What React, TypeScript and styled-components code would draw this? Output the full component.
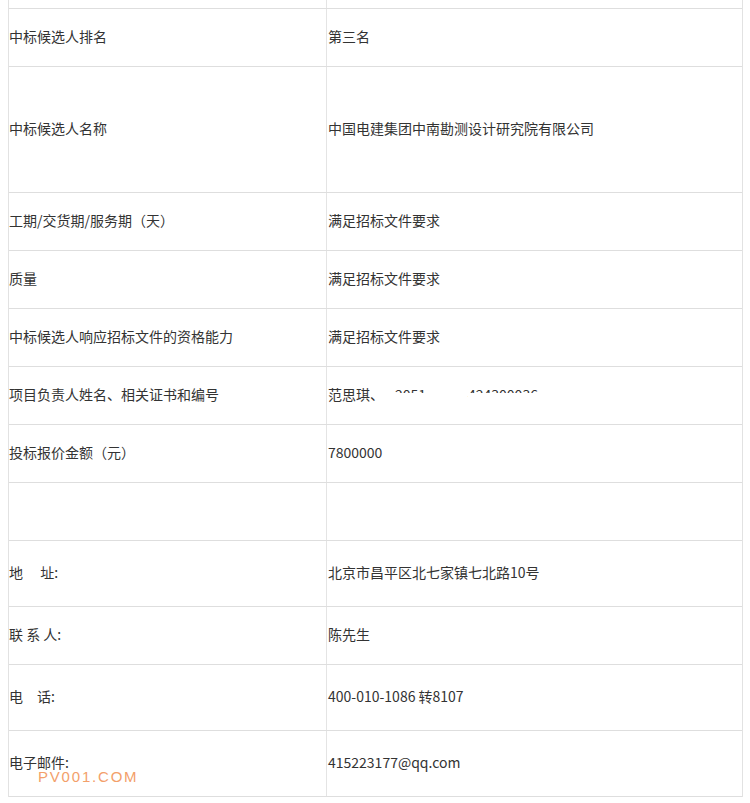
import React from "react";
import styled, { createGlobalStyle } from "styled-components";

const GlobalStyle = createGlobalStyle`
  html, body {
    margin: 0;
    padding: 0;
    background: #ffffff;
  }
  body {
    font-family: "Noto Sans CJK SC", "Microsoft YaHei", sans-serif;
    color: #333333;
  }
`;

const Page = styled.div`
  padding: 0 0 0 8px;
  width: 750px;
  box-sizing: border-box;
`;

const Table = styled.div`
  width: 735px;
  box-sizing: border-box;
  border-left: 1px solid #e2e2e2;
  border-right: 1px solid #e2e2e2;
`;

const Row = styled.div<{ $h: number }>`
  display: grid;
  grid-template-columns: 318px 1fr;
  height: ${(p) => p.$h}px;
  box-sizing: border-box;
  border-bottom: 1px solid #dedede;
`;

const Cell = styled.div`
  display: flex;
  align-items: center;
  padding: 0 0 3px 0;
  font-size: 14px;
  line-height: 20px;
  white-space: pre;
  position: relative;
`;

const LabelCell = styled(Cell)`
  border-right: 1px solid #e4e4e4;
`;

const ValueCell = styled(Cell)`
  padding-left: 1px;
`;

const Redacted = styled.span`
  position: relative;
  display: inline-block;
  &::after {
    content: "";
    position: absolute;
    left: 0;
    right: 0;
    top: 9px;
    bottom: 0;
    background: #ffffff;
  }
`;

const Gap = styled.span<{ $w: number }>`
  display: inline-block;
  width: ${(p) => p.$w}px;
`;

const Watermark = styled.span`
  position: absolute;
  left: 29px;
  top: 38px;
  font-family: "Liberation Sans", Arial, sans-serif;
  font-size: 15px;
  letter-spacing: 1.8px;
  color: #f3a06a;
  line-height: 16px;
`;

type Item = { label: string; value: React.ReactNode; h: number };

const items: Item[] = [
  { label: "中标候选人排名", value: "第三名", h: 58 },
  { label: "中标候选人名称", value: "中国电建集团中南勘测设计研究院有限公司", h: 126 },
  { label: "工期/交货期/服务期（天）", value: "满足招标文件要求", h: 58 },
  { label: "质量", value: "满足招标文件要求", h: 58 },
  { label: "中标候选人响应招标文件的资格能力", value: "满足招标文件要求", h: 58 },
  {
    label: "项目负责人姓名、相关证书和编号",
    value: (
      <>
        范思琪、
        <Redacted>. .2051</Redacted>
        <Gap $w={42} />
        <Redacted>424300036</Redacted>
      </>
    ),
    h: 58,
  },
  { label: "投标报价金额（元）", value: "7800000", h: 58 },
  { label: "", value: "", h: 58 },
  { label: "地　 址:", value: "北京市昌平区北七家镇七北路10号", h: 66 },
  { label: "联 系 人:", value: "陈先生", h: 58 },
  { label: "电　话:", value: "400-010-1086 转8107", h: 66 },
];

export default function App() {
  return (
    <Page>
      <GlobalStyle />
      <Table>
        <Row $h={9}>
          <LabelCell />
          <ValueCell />
        </Row>
        {items.map((it, i) => (
          <Row key={i} $h={it.h}>
            <LabelCell>{it.label}</LabelCell>
            <ValueCell>{it.value}</ValueCell>
          </Row>
        ))}
        <Row $h={66}>
          <LabelCell>
            电子邮件:
            <Watermark>PV001.COM</Watermark>
          </LabelCell>
          <ValueCell>415223177@qq.com</ValueCell>
        </Row>
      </Table>
    </Page>
  );
}
